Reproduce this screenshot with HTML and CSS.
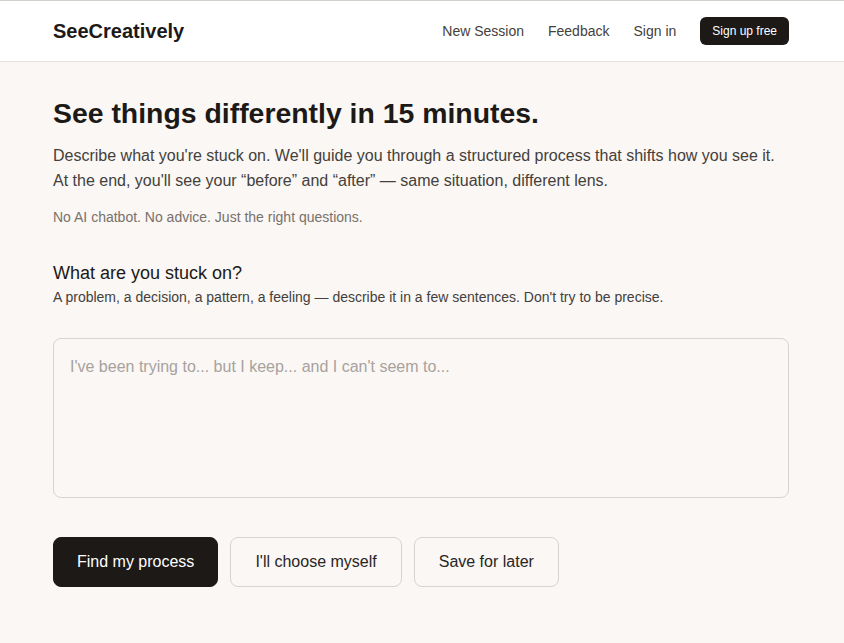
FILE: index.html
```html
<!DOCTYPE html>
<html lang="en">
<head>
<meta charset="utf-8">
<title>SeeCreatively</title>
<link rel="stylesheet" href="styles.css">
</head>
<body>
<header class="site-header">
  <div class="container header-inner">
    <div class="logo">SeeCreatively</div>
    <nav class="nav">
      <a class="nav-link" href="#">New Session</a>
      <a class="nav-link" href="#">Feedback</a>
      <a class="nav-link" href="#">Sign in</a>
      <a class="nav-cta" href="#">Sign up free</a>
    </nav>
  </div>
</header>
<main class="container main">
  <h1 class="title">See things differently in 15 minutes.</h1>
  <p class="lead">Describe what you're stuck on. We'll guide you through a structured process that shifts how you see it. At the end, you'll see your “before” and “after” — same situation, different lens.</p>
  <p class="note">No AI chatbot. No advice. Just the right questions.</p>
  <h2 class="label">What are you stuck on?</h2>
  <p class="hint">A problem, a decision, a pattern, a feeling — describe it in a few sentences. Don't try to be precise.</p>
  <textarea class="input" placeholder="I've been trying to... but I keep... and I can't seem to..."></textarea>
  <div class="actions">
    <button class="btn btn-primary">Find my process</button>
    <button class="btn btn-secondary">I'll choose myself</button>
    <button class="btn btn-secondary">Save for later</button>
  </div>
</main>
</body>
</html>
```
FILE: styles.css
```css
* { box-sizing: border-box; }
html, body { margin: 0; padding: 0; }
body {
  font-family: "Liberation Sans", Arial, sans-serif;
  background: #faf7f4;
  color: #1c1917;
  border-top: 1px solid #d2d2cc;
}
.container {
  width: 736px;
  margin: 0 auto;
  position: relative;
  left: -1px;
}
.site-header {
  background: #ffffff;
  border-bottom: 1px solid #e7e2dc;
}
.header-inner {
  display: flex;
  align-items: center;
  justify-content: space-between;
  height: 60px;
}
.logo {
  font-size: 20px;
  font-weight: 700;
  color: #1c1917;
}
.nav {
  display: flex;
  align-items: center;
  gap: 24px;
}
.nav-link {
  font-size: 14px;
  color: #44403c;
  text-decoration: none;
}
.nav-cta {
  background: #1c1917;
  color: #ffffff;
  font-size: 12px;
  text-decoration: none;
  padding: 0 12px;
  height: 28px;
  line-height: 28px;
  border-radius: 6px;
}
.main {
  padding-top: 33px;
}
.title {
  font-size: 28.4px;
  font-weight: 700;
  margin: 0;
  line-height: 36px;
  color: #1c1917;
}
.lead {
  font-size: 16px;
  line-height: 25px;
  color: #44403c;
  margin: 12px 0 0;
}
.note {
  font-size: 14px;
  color: #78716c;
  margin: 14px 0 0;
  line-height: 20px;
}
.label {
  font-size: 18px;
  font-weight: 400;
  margin: 34px 0 0;
  line-height: 24px;
  color: #1c1917;
}
.hint {
  font-size: 14px;
  color: #44403c;
  margin: 2px 0 0;
  line-height: 20px;
}
.input {
  display: block;
  width: 100%;
  height: 160px;
  margin-top: 31px;
  padding: 17px 16px;
  font-family: inherit;
  font-size: 16px;
  line-height: 22px;
  color: #1c1917;
  background: #faf7f4;
  border: 1px solid #d6d3d1;
  border-radius: 8px;
  resize: none;
}
.input::placeholder { color: #a8a29e; }
.actions {
  display: flex;
  gap: 12px;
  margin-top: 39px;
}
.btn {
  font-family: inherit;
  font-size: 16px;
  height: 50px;
  padding: 0 24px;
  border-radius: 8px;
  cursor: pointer;
}
.btn-primary {
  background: #1c1917;
  color: #ffffff;
  border: 1px solid #1c1917;
  padding: 0 23px;
}
.btn-secondary {
  background: #faf7f4;
  color: #292524;
  border: 1px solid #d6d3d1;
}
```
